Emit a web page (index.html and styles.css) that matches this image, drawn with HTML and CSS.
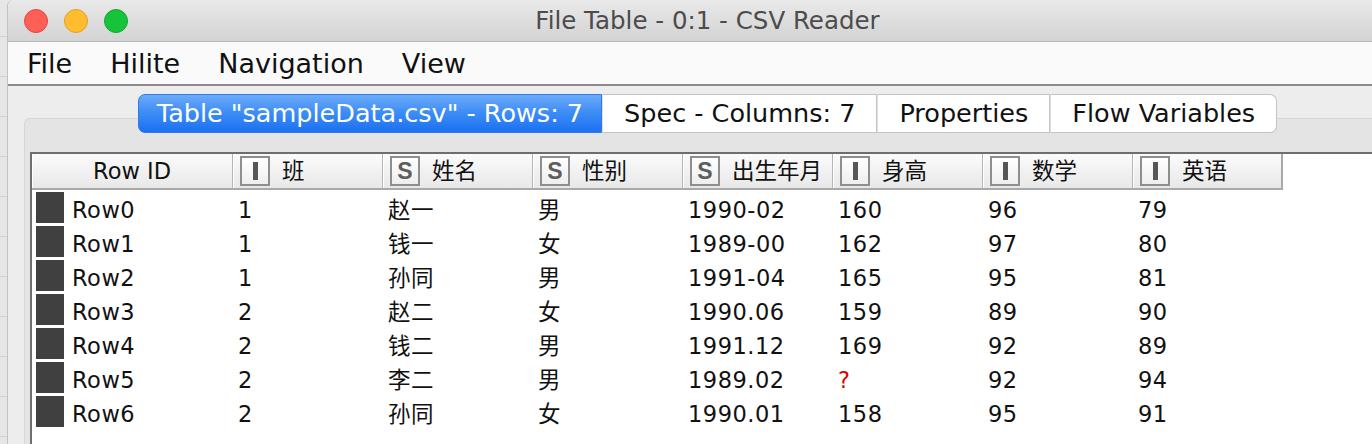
FILE: index.html
```html
<!DOCTYPE html>
<html lang="en">
<head>
    <meta charset="UTF-8">
    <title>File Table - 0:1 - CSV Reader</title>
    <link rel="stylesheet" href="styles.css">
</head>
<body>

<div class="desk">
    <div class="window">
        <!-- Title bar -->
        <div class="titlebar">
            <div class="lights">
                <span class="light red"></span>
                <span class="light yellow"></span>
                <span class="light green"></span>
            </div>
            <div class="title">File Table - 0:1 - CSV Reader</div>
            <div></div>
        </div>

        <!-- Menu -->
        <div class="menubar">
            <span class="menu-item">File</span>
            <span class="menu-item">Hilite</span>
            <span class="menu-item">Navigation</span>
            <span class="menu-item">View</span>
        </div>

        <div class="content">
            <div class="tabs">
                <div class="tab active">Table "sampleData.csv" - Rows: 7</div>
                <div class="tab">Spec - Columns: 7</div>
                <div class="tab">Properties</div>
                <div class="tab last">Flow Variables</div>
            </div>

            <div class="panel">
                <div class="table">
                    <div class="thead">
                        <div class="th rowid">Row ID</div>
                        <div class="th"><span class="type int"><span class="bar"></span></span>班</div>
                        <div class="th"><span class="type str">S</span>姓名</div>
                        <div class="th"><span class="type str">S</span>性别</div>
                        <div class="th"><span class="type str">S</span>出生年月</div>
                        <div class="th"><span class="type int"><span class="bar"></span></span>身高</div>
                        <div class="th"><span class="type int"><span class="bar"></span></span>数学</div>
                        <div class="th end"><span class="type int"><span class="bar"></span></span>英语</div>
                    </div>
                    <div id="rows"></div>
                </div>
            </div>
        </div>
    </div>
</div>

<script>
    // sample rows from the CSV
    const data = [
        ['Row0', '1', '赵一', '男', '1990-02', '160', '96', '79'],
        ['Row1', '1', '钱一', '女', '1989-00', '162', '97', '80'],
        ['Row2', '1', '孙同', '男', '1991-04', '165', '95', '81'],
        ['Row3', '2', '赵二', '女', '1990.06', '159', '89', '90'],
        ['Row4', '2', '钱二', '男', '1991.12', '169', '92', '89'],
        ['Row5', '2', '李二', '男', '1989.02', '?', '92', '94'],
        ['Row6', '2', '孙同', '女', '1990.01', '158', '95', '91']
    ];

    const rowsDiv = document.getElementById('rows');
    data.forEach(function (r) {
        const row = document.createElement('div');
        row.className = 'tr';
        let html = '<div class="td rowid"><span class="hilite"></span><span class="rid">' + r[0] + '</span></div>';
        for (let i = 1; i < r.length; i++) {
            const cls = r[i] === '?' ? 'td missing' : 'td';
            html += '<div class="' + cls + '">' + r[i] + '</div>';
        }
        row.innerHTML = html;
        rowsDiv.appendChild(row);
    });
</script>

</body>
</html>
```

FILE: styles.css
```css
/* Global */
body {
    margin: 0;
    padding: 0;
    height: 444px;
    overflow: hidden;
    font-family: "DejaVu Sans", "Noto Sans CJK SC", sans-serif;
}

.desk {
    height: 444px;
    padding-left: 7px;
    background-color: #e6e6e6;
    background-image: repeating-linear-gradient(to bottom, transparent 0, transparent 36px, #d2d2d2 36px, #d2d2d2 37px, transparent 37px, transparent 40px);
}

.window {
    width: 1399px;
    height: 444px;
    border-left: 1px solid #c2c2c2;
    background-color: #ededed;
    border-top-left-radius: 6px;
}

/* Title bar */
.titlebar {
    display: grid;
    grid-template-columns: 1fr auto 1fr;
    align-items: center;
    height: 41px;
    border-bottom: 1px solid #b8b8b8;
    background: linear-gradient(#e9e9e9, #d3d3d3);
    border-top-left-radius: 6px;
}

.lights {
    display: flex;
    gap: 16px;
    padding-left: 16px;
}

.light {
    width: 22px;
    height: 22px;
    border-radius: 50%;
    border: 1px solid;
}

.red {
    background-color: #fe5f57;
    border-color: #e2463f;
}

.yellow {
    background-color: #febc2e;
    border-color: #e0a128;
}

.green {
    background-color: #16c43c;
    border-color: #10a92c;
}

.title {
    font-size: 24.5px;
    line-height: 41px;
    color: #4c4c4c;
}

/* Menu */
.menubar {
    display: flex;
    height: 40px;
    padding-top: 2px;
    background-color: #fafafa;
    border-bottom: 2px solid #8b8b8b;
}

.menu-item {
    font-size: 27px;
    line-height: 40px;
    padding: 0 19px;
    color: #111;
}

/* Tabs */
.content {
    padding-top: 8px;
}

.tabs {
    display: flex;
    justify-content: center;
    position: relative;
    z-index: 1;
}

.tab {
    height: 37px;
    line-height: 37px;
    font-size: 25.5px;
    padding: 0 21px;
    color: #111;
    background-color: #fff;
    border: 1px solid #c4c4c4;
    border-left: 1px solid #dedede;
}

.tab.active {
    padding: 0 18px;
    color: #fff;
    background: linear-gradient(#6cabfa, #3f8ef6 45%, #1b70f1);
    border: 1px solid #2f7bec;
    border-radius: 7px 0 0 7px;
}

.tab.last {
    border-radius: 0 7px 7px 0;
}

.panel {
    margin: -15px 0 0 16px;
    padding: 33px 0 0 5px;
    border: 1px solid #d6d6d6;
    border-right: none;
    border-radius: 6px 0 0 0;
    background-color: #e4e4e4;
}

/* Table */
.table {
    height: 300px;
    border-top: 2px solid #6e6e6e;
    border-left: 2px solid #6e6e6e;
    background-color: #fff;
    font-size: 22.5px;
    color: #111;
}

.thead, .tr {
    display: grid;
    grid-template-columns: 201px repeat(7, 150px);
}

.th {
    display: flex;
    align-items: center;
    height: 34px;
    padding-left: 7px;
    line-height: 34px;
    background: linear-gradient(#fbfbfb, #e8e8e8);
    border-right: 1px solid #b5b5b5;
    border-bottom: 2px solid #a9a9a9;
    box-shadow: inset 1px 0 0 #fff;
    white-space: nowrap;
}

.th.rowid {
    justify-content: center;
    padding-left: 0;
}

.th.end {
    border-right: 2px solid #a9a9a9;
}

.type {
    display: flex;
    align-items: center;
    justify-content: center;
    box-sizing: border-box;
    width: 30px;
    height: 30px;
    margin-right: 12px;
    border: 2px solid #8e8e8e;
    background: linear-gradient(#fff, #eeeeee);
}

.type .bar {
    width: 5px;
    height: 18px;
    background-color: #555;
}

.type.str {
    font-family: "Liberation Sans", Arial, sans-serif;
    font-weight: bold;
    font-size: 23px;
    color: #5e5e5e;
}

.td {
    height: 34px;
    box-sizing: border-box;
    padding: 6px 0 0 5px;
    line-height: 28px;
    letter-spacing: 0.5px;
    overflow: hidden;
    white-space: nowrap;
}

.td.rowid {
    display: flex;
    align-items: flex-start;
    padding: 2px 0 0 4px;
}

.hilite {
    width: 28px;
    height: 31px;
    background-color: #404040;
}

.rid {
    margin-left: 8px;
    padding-top: 4px;
    line-height: 28px;
}

.missing {
    color: #e00000;
}
```
